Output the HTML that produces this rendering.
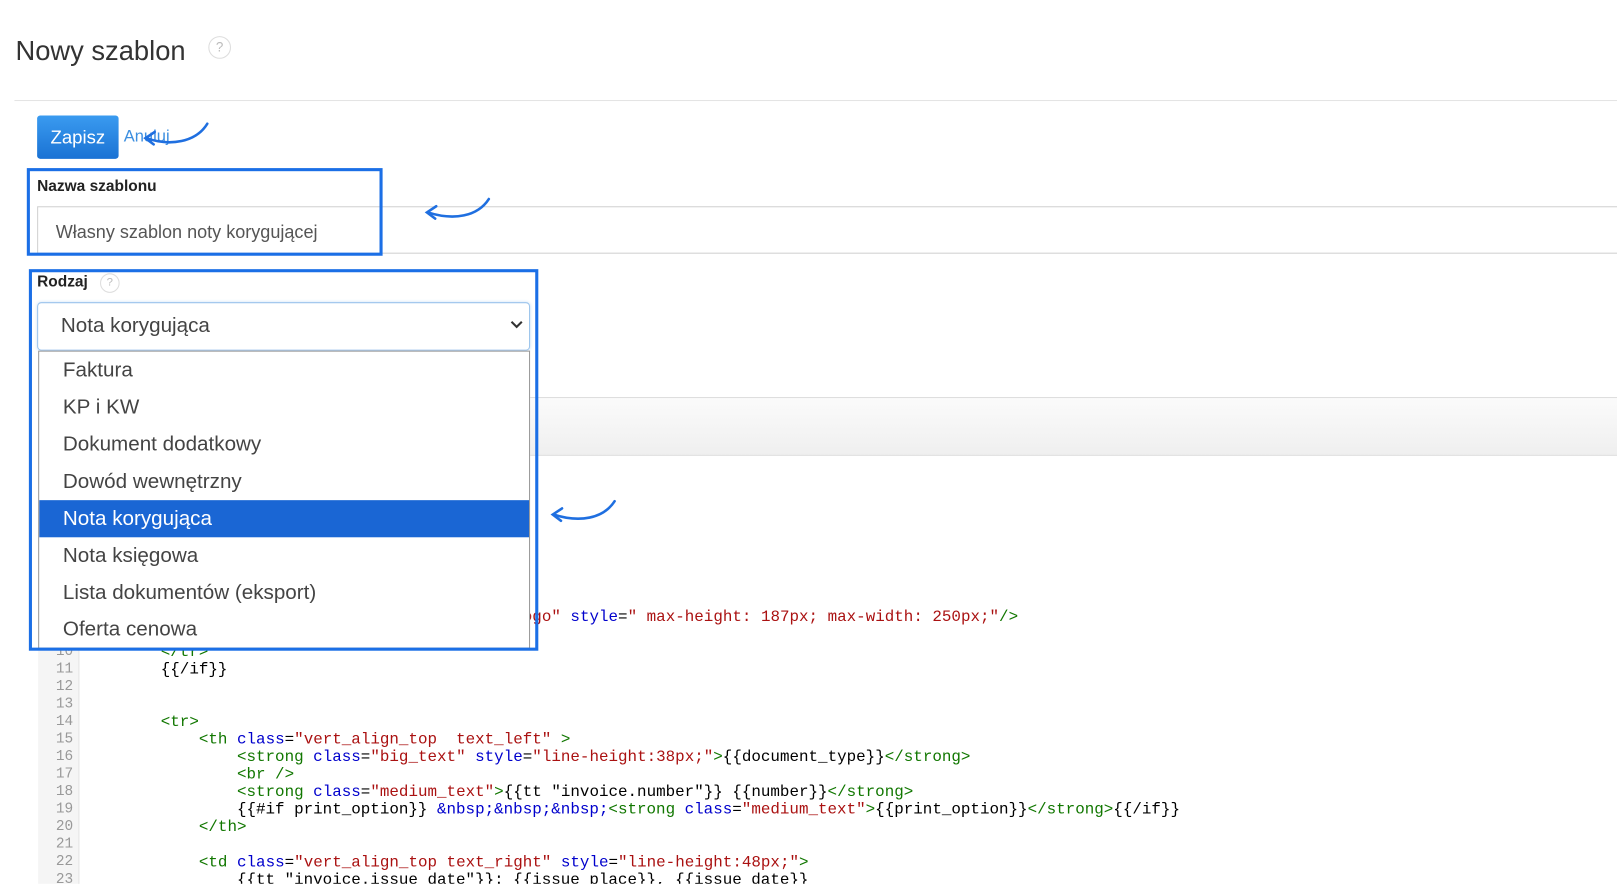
<!DOCTYPE html>
<html><head><meta charset="utf-8"><style>
html,body{margin:0;padding:0;background:#fff;width:1617px;height:896px;overflow:hidden}
#w{position:absolute;left:0;top:0;width:1568px;height:869px;transform:scale(1.03125);transform-origin:0 0;font-family:"Liberation Sans",sans-serif}
.a{position:absolute}
.hc{position:absolute;border:1px solid #ddd;border-radius:50%;color:#bbb;text-align:center;box-sizing:border-box}
.code{position:absolute;left:82px;font-family:"Liberation Mono",monospace;font-size:15.4px;white-space:pre;line-height:17px;color:#000}
.ln{position:absolute;left:37px;width:34px;text-align:right;font-family:"Liberation Mono",monospace;font-size:14px;color:#999;line-height:17px}
.t{color:#117700}.at{color:#0000cc}.s{color:#aa1111}
.opt{position:absolute;left:23px;font-size:20px;color:#444}
</style></head><body><div id="w">
<div class="a" style="left:15px;top:34px;font-size:26.5px;color:#333">Nowy szablon</div>
<div class="hc" style="left:202px;top:35px;width:22px;height:22px;font-size:13px;line-height:20px">?</div>
<div class="a" style="left:14px;top:97px;width:1554px;height:1px;background:#e3e3e3"></div>
<div class="a" style="left:36px;top:112px;width:79px;height:42px;border-radius:3px;background:linear-gradient(#3a9bf0,#1a72d4);color:#fff;font-size:18px;line-height:42px;text-align:center">Zapisz</div>
<div class="a" style="left:120px;top:124px;font-size:16px;color:#3d8fe0">Anuluj</div>
<div class="a" style="left:36px;top:172px;font-size:15px;font-weight:bold;color:#222">Nazwa szablonu</div>
<div class="a" style="left:36px;top:200px;width:1540px;height:46px;border:1px solid #d0d0d0;box-sizing:border-box"></div>
<div class="a" style="left:54px;top:215px;font-size:17.5px;color:#555">Własny szablon noty korygującej</div>
<div class="a" style="left:26px;top:163px;width:345px;height:85px;border:3px solid #1b6fe6;box-sizing:border-box"></div>
<div class="a" style="left:36px;top:265px;font-size:15px;font-weight:bold;color:#222">Rodzaj</div>
<div class="hc" style="left:97px;top:265px;width:19px;height:19px;font-size:11px;line-height:17px">?</div>
<div class="a" style="left:514px;top:385px;width:1054px;height:55px;background:linear-gradient(#fbfbfb,#efefef);border-top:1px solid #ddd;border-bottom:1px solid #ddd"></div>
<div class="a" style="left:37px;top:560px;width:39px;height:297px;background:#f5f5f5;border-right:1px solid #e5e5e5"></div>
<div class="ln" style="top:624px">10<br>11<br>12<br>13<br>14<br>15<br>16<br>17<br>18<br>19<br>20<br>21<br>22<br>23</div>
<div class="code" style="top:590px">                    <span class="t">&lt;img</span> <span class="at">src</span>=<span class="s">"{{logo}}"</span> <span class="at">alt</span>=<span class="s">"logo"</span> <span class="at">style</span>=<span class="s">" max-height: 187px; max-width: 250px;"</span><span class="t">/&gt;</span></div>
<div class="code" style="top:624px;height:233px;overflow:hidden">        <span class="t">&lt;/tr&gt;</span>
        {{/if}}


        <span class="t">&lt;tr&gt;</span>
            <span class="t">&lt;th</span> <span class="at">class</span>=<span class="s">"vert_align_top  text_left"</span> <span class="t">&gt;</span>
                <span class="t">&lt;strong</span> <span class="at">class</span>=<span class="s">"big_text"</span> <span class="at">style</span>=<span class="s">"line-height:38px;"</span><span class="t">&gt;</span>{{document_type}}<span class="t">&lt;/strong&gt;</span>
                <span class="t">&lt;br /&gt;</span>
                <span class="t">&lt;strong</span> <span class="at">class</span>=<span class="s">"medium_text"</span><span class="t">&gt;</span>{{tt "invoice.number"}} {{number}}<span class="t">&lt;/strong&gt;</span>
                {{#if print_option}} <span class="at">&amp;nbsp;&amp;nbsp;&amp;nbsp;</span><span class="t">&lt;strong</span> <span class="at">class</span>=<span class="s">"medium_text"</span><span class="t">&gt;</span>{{print_option}}<span class="t">&lt;/strong&gt;</span>{{/if}}
            <span class="t">&lt;/th&gt;</span>

            <span class="t">&lt;td</span> <span class="at">class</span>=<span class="s">"vert_align_top text_right"</span> <span class="at">style</span>=<span class="s">"line-height:48px;"</span><span class="t">&gt;</span>
                {{tt "invoice.issue_date"}}: {{issue_place}}, {{issue_date}}</div>
<div class="a" style="left:36px;top:293px;width:478px;height:47px;border:1px solid #9cc4ec;border-radius:4px;box-sizing:border-box;background:#fff;box-shadow:0 0 3px #cfe3f7"></div>
<div class="a" style="left:59px;top:305px;font-size:20px;color:#444">Nota korygująca</div>
<svg class="a" style="left:494px;top:310px" width="14" height="10" viewBox="0 0 14 10"><path d="M2 2 L7 7 L12 2" fill="none" stroke="#333" stroke-width="2"/></svg>
<div class="a" style="left:37px;top:340px;width:477px;height:289px;background:#fff;border:1px solid #999;box-sizing:border-box;overflow:hidden">
<div class="opt" style="top:7px">Faktura</div>
<div class="opt" style="top:43px">KP i KW</div>
<div class="opt" style="top:79px">Dokument dodatkowy</div>
<div class="opt" style="top:115px">Dowód wewnętrzny</div>
<div class="a" style="left:0;top:144px;width:477px;height:36px;background:#1a66d4"></div>
<div class="opt" style="top:151px;color:#fff">Nota korygująca</div>
<div class="opt" style="top:187px">Nota księgowa</div>
<div class="opt" style="top:223px">Lista dokumentów (eksport)</div>
<div class="opt" style="top:258px">Oferta cenowa</div>
</div>
<div class="a" style="left:28px;top:261px;width:494px;height:370px;border:3px solid #1b6fe6;box-sizing:border-box"></div>
<svg class="a" style="left:0;top:0" width="1568" height="869">
<g fill="none" stroke="#1f6fe0" stroke-width="2.5" stroke-linecap="round">
<path d="M201 120 C190 138 165 142 142 134"/><path d="M150 128 L141 134 L149 140"/>
<path d="M474 193 C463 210 440 214 415 206"/><path d="M423 200 L414 206 L422 212"/>
<path d="M596 486 C585 503 562 507 537 499"/><path d="M545 493 L536 499 L544 505"/>
</g></svg>
</div></body></html>
